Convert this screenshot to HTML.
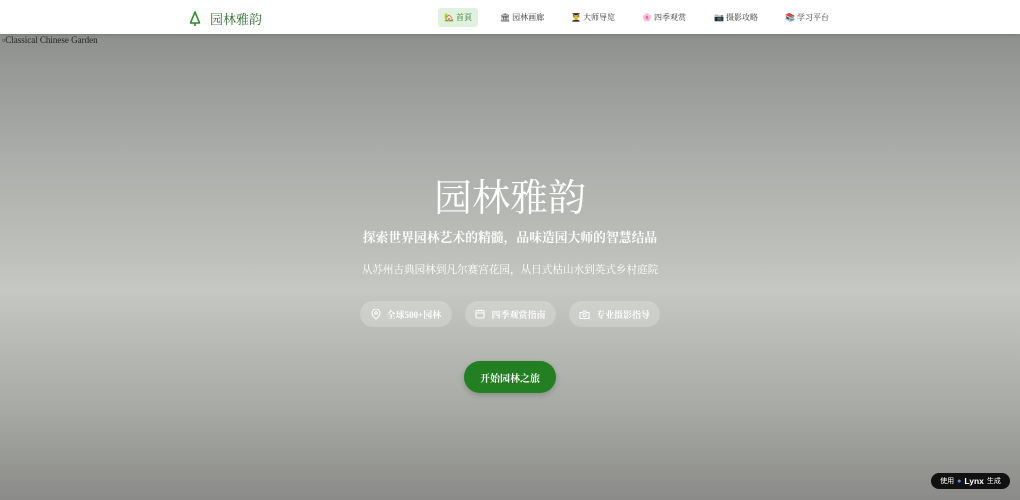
<!DOCTYPE html>
<html><head><meta charset="utf-8"><style>
*{margin:0;padding:0;box-sizing:border-box}
body{width:1020px;height:500px;overflow:hidden;font-family:"Liberation Serif","Noto Serif CJK SC",serif;position:relative;background:#999}
.hero{position:absolute;left:0;top:34px;width:1020px;height:466px;background:linear-gradient(180deg,#8e908d 0%,#a9aca8 25%,#c4c7c2 55%,#a8aaa6 80%,#8a8b88 100%)}
.alt{position:absolute;left:2px;top:35px;font-size:9px;color:#222}
.nav{position:absolute;left:0;top:0;width:1020px;height:34px;background:#fff;box-shadow:0 1px 4px rgba(0,0,0,.15);z-index:2}
.logo{position:absolute;left:188px;top:9px;font-size:13px;color:#2d6a2d;display:flex;align-items:center;gap:8px}
.nav a{position:absolute;top:8px;height:19px;font-size:8px;color:#333;display:flex;align-items:center;padding:0 6px;border-radius:3px}
.nav a.on{background:#e0f2df;color:#1f6b1f}
.h1{position:absolute;top:176px;width:100%;text-align:center;font-size:38px;color:#fff;line-height:46px}
.sub{position:absolute;top:227px;width:100%;text-align:center;font-size:12.8px;color:#fff;font-weight:bold}
.sub2{position:absolute;top:262px;width:100%;text-align:center;font-size:10.6px;color:#fff}
.pill{position:absolute;top:301px;height:26px;border-radius:13px;background:rgba(255,255,255,.22);color:#fff;font-size:9px;font-weight:bold;display:flex;align-items:center;justify-content:center;gap:6px}
.btn{position:absolute;left:464px;top:361px;width:92px;height:32px;border-radius:16px;background:#228022;color:#fff;font-size:10px;font-weight:bold;display:flex;align-items:center;justify-content:center;box-shadow:0 2px 6px rgba(0,0,0,.2)}
.lynx{position:absolute;left:931px;top:473px;width:79px;height:16px;border-radius:8px;background:#111;color:#fff;font-family:"Liberation Sans","Noto Sans CJK SC",sans-serif;font-size:7px;display:flex;align-items:center;justify-content:center;gap:3px}
</style></head><body>
<div class="hero"></div>
<div class="alt">&#9643;Classical Chinese Garden</div>
<div class="nav">
<div class="logo"><svg width="14" height="16" viewBox="0 0 14 16"><path d="M7 1L2.5 12h9L7 1zM7 12v3" fill="none" stroke="#2d8a2d" stroke-width="1.6" stroke-linejoin="round"/></svg>园林雅韵</div>
<a class="on" style="left:438px">🏡 首頁</a>
<a style="left:494px">🏛 园林画廊</a>
<a style="left:565px">👨‍🎓 大师导览</a>
<a style="left:636px">🌸 四季观赏</a>
<a style="left:708px">📷 摄影攻略</a>
<a style="left:779px">📚 学习平台</a>
</div>
<div class="h1">园林雅韵</div>
<div class="sub">探索世界园林艺术的精髓，品味造园大师的智慧结晶</div>
<div class="sub2">从苏州古典园林到凡尔赛宫花园，从日式枯山水到英式乡村庭院</div>
<div class="pill" style="left:360px;width:92px"><svg width="10" height="11" viewBox="0 0 10 11"><path d="M5 10S1 6.5 1 4a4 4 0 018 0c0 2.5-4 6-4 6z" fill="none" stroke="#fff"/><circle cx="5" cy="4" r="1.3" fill="none" stroke="#fff"/></svg>全球500+园林</div>
<div class="pill" style="left:465px;width:91px"><svg width="10" height="10" viewBox="0 0 10 10"><rect x="1" y="1.5" width="8" height="7.5" rx="1" fill="none" stroke="#fff"/><path d="M1 4h8M3.5 0.5v2M6.5 0.5v2" stroke="#fff"/></svg>四季观赏指南</div>
<div class="pill" style="left:569px;width:91px"><svg width="11" height="9" viewBox="0 0 11 9"><path d="M1 2.5h2.5l1-1.5h2l1 1.5H10v6H1z" fill="none" stroke="#fff"/><circle cx="5.5" cy="5" r="1.7" fill="none" stroke="#fff"/></svg>专业摄影指导</div>
<div class="btn">开始园林之旅</div>
<div class="lynx">使用 <span style="color:#5b8cff">●</span><b style="font-size:8.5px">Lynx</b> 生成</div>
</body></html>
